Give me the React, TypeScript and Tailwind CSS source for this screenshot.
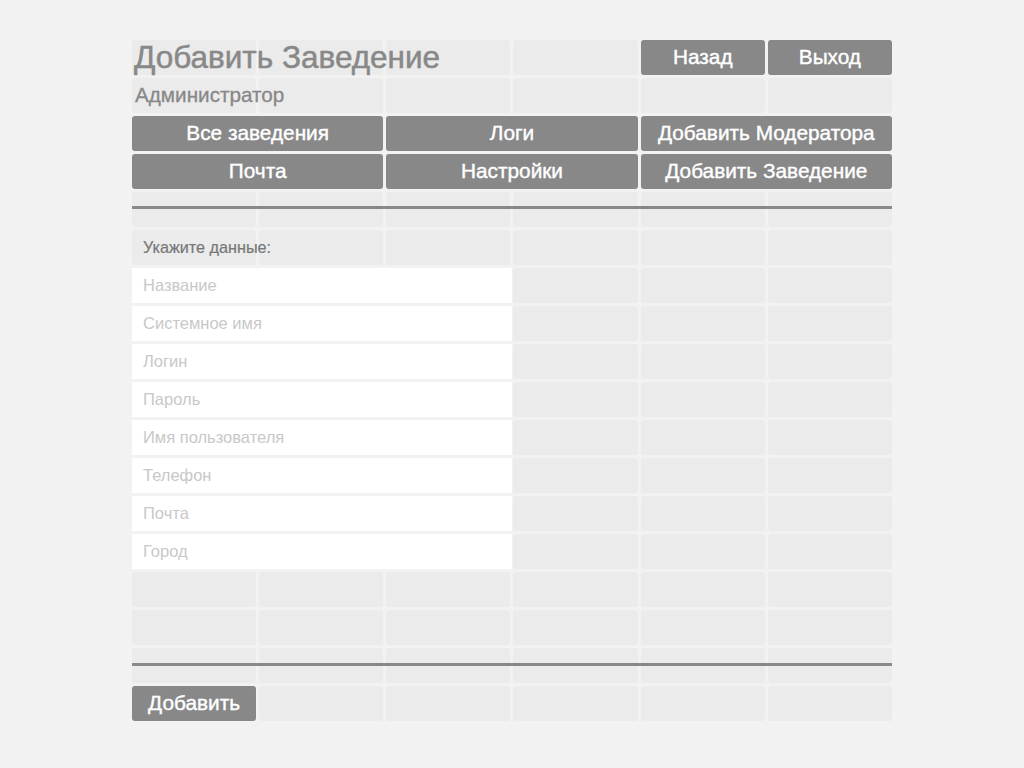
const ROWS = 18
const COLS = 6

const fields = [
  'Название',
  'Системное имя',
  'Логин',
  'Пароль',
  'Имя пользователя',
  'Телефон',
  'Почта',
  'Город',
]

const rowStart = [
  'row-start-7',
  'row-start-8',
  'row-start-9',
  'row-start-10',
  'row-start-11',
  'row-start-12',
  'row-start-13',
  'row-start-14',
]

function Btn({ className, children }: { className: string; children: React.ReactNode }) {
  return (
    <button
      className={`flex items-center justify-center rounded-[3px] bg-[#888888] text-[20.8px] leading-none text-white [-webkit-text-stroke:0.4px_#ffffff] ${className}`}
    >
      {children}
    </button>
  )
}

export default function App() {
  const cells = Array.from({ length: ROWS * COLS }, (_, i) => i)

  return (
    <div className="min-h-screen bg-[#f2f2f2] pt-[40px] font-['Liberation_Sans',Arial,sans-serif]">
      <div className="mx-auto grid w-[760px] grid-cols-6 auto-rows-[35px] gap-[3px]">
        {/* фоновая сетка */}
        {cells.map((i) => (
          <div
            key={i}
            className="rounded-[3px] bg-[#ebebeb]"
            style={{ gridRow: Math.floor(i / COLS) + 1, gridColumn: (i % COLS) + 1 }}
          />
        ))}

        {/* шапка */}
        <h1 className="col-span-4 col-start-1 row-start-1 flex items-center pl-[2px] text-[31.5px] leading-none text-[#888888] [-webkit-text-stroke:0.5px_#888888]">
          Добавить Заведение
        </h1>
        <Btn className="col-start-5 row-start-1">Назад</Btn>
        <Btn className="col-start-6 row-start-1">Выход</Btn>

        <div className="col-span-3 col-start-1 row-start-2 flex items-center pl-[3px] text-[20.7px] leading-none text-[#888888] [-webkit-text-stroke:0.3px_#888888]">
          Администратор
        </div>

        {/* меню */}
        <Btn className="col-span-2 col-start-1 row-start-3">Все заведения</Btn>
        <Btn className="col-span-2 col-start-3 row-start-3">Логи</Btn>
        <Btn className="col-span-2 col-start-5 row-start-3">Добавить Модератора</Btn>
        <Btn className="col-span-2 col-start-1 row-start-4">Почта</Btn>
        <Btn className="col-span-2 col-start-3 row-start-4">Настройки</Btn>
        <Btn className="col-span-2 col-start-5 row-start-4">Добавить Заведение</Btn>

        <div className="col-span-6 col-start-1 row-start-5 mt-[14px] h-[3px] self-start bg-[#888888]" />

        {/* форма */}
        <div className="col-span-3 col-start-1 row-start-6 flex items-center pl-[11px] text-[16.2px] leading-none text-[#777777] [-webkit-text-stroke:0.2px_#777777]">
          Укажите данные:
        </div>
        {fields.map((f, i) => (
          <input
            key={f}
            placeholder={f}
            className={`col-start-1 ${rowStart[i]} w-[380px] bg-white pl-[11px] text-[16.5px] text-[#555555] outline-none placeholder:text-[#c8c8c8]`}
          />
        ))}

        <div className="col-span-6 col-start-1 row-start-17 mt-[15px] h-[3px] self-start bg-[#888888]" />

        <Btn className="col-start-1 row-start-18">Добавить</Btn>
      </div>
    </div>
  )
}
